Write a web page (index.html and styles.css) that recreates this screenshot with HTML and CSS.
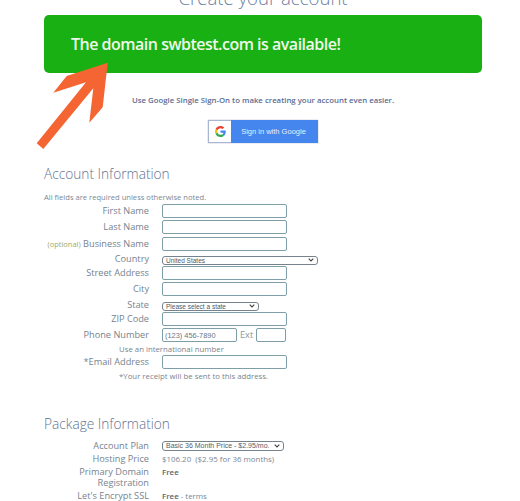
FILE: index.html
```html
<!DOCTYPE html>
<html lang="en">
<head>
    <meta charset="UTF-8">
    <title>Create your account</title>
    <link rel="stylesheet" href="styles.css">
</head>
<body>
    <div class="page">
        <h1>Create your account</h1>

        <div class="banner">The domain swbtest.com is available!</div>

        <svg class="arrow" width="90" height="100" viewBox="0 0 90 100">
            <polygon points="80.7,5.7 39.7,19 26.3,35.7 59,25.3 9.7,86.3 16.3,92 66.3,31.3 62.3,65.7 75.7,50.3"/>
        </svg>

        <p class="sso-text">Use Google Single Sign-On to make creating your account even easier.</p>

        <div class="google-wrap">
            <a href="#" class="google-btn">
                <span class="google-icon">
                    <svg width="11" height="11" viewBox="0 0 48 48">
                        <path fill="#EA4335" d="M24 9.5c3.500 0 6.700 1.200 9.200 3.600l6.900-6.900C35.900 2.400 30.500 0 24 0 14.600 0 6.500 5.400 2.600 13.200l8 6.200C12.500 13.700 17.800 9.500 24 9.500z"/>
                        <path fill="#4285F4" d="M46.900 24.500c0-1.600-.1-3.100-.4-4.500H24v9h12.900c-.6 3-2.200 5.500-4.700 7.200l7.700 6c4.500-4.200 7-10.300 7-17.700z"/>
                        <path fill="#FBBC05" d="M10.500 28.600c-.5-1.400-.8-3-.8-4.600s.3-3.200.8-4.600l-8-6.200C.9 16.500 0 20.100 0 24s.9 7.500 2.600 10.800l7.900-6.200z"/>
                        <path fill="#34A853" d="M24 48c6.500 0 11.900-2.100 15.900-5.800l-7.700-6c-2.200 1.400-4.900 2.300-8.200 2.300-6.200 0-11.500-4.200-13.400-9.900l-8 6.200C6.500 42.600 14.600 48 24 48z"/>
                    </svg>
                </span>
                <span class="google-label">Sign in with Google</span>
            </a>
        </div>

        <h2 class="section-first">Account Information</h2>
        <p class="note">All fields are required unless otherwise noted.</p>

        <div class="row">
            <label>First Name</label>
            <input type="text" class="field">
        </div>
        <div class="row">
            <label>Last Name</label>
            <input type="text" class="field">
        </div>
        <div class="row">
            <label><span class="optional">(optional)</span> Business Name</label>
            <input type="text" class="field">
        </div>
        <div class="row row-country">
            <label>Country</label>
            <select class="country"><option>United States</option></select>
        </div>
        <div class="row">
            <label>Street Address</label>
            <input type="text" class="field">
        </div>
        <div class="row">
            <label>City</label>
            <input type="text" class="field">
        </div>
        <div class="row row-state">
            <label>State</label>
            <select class="state"><option>Please select a state</option></select>
        </div>
        <div class="row">
            <label>ZIP Code</label>
            <input type="text" class="field">
        </div>
        <div class="row">
            <label>Phone Number</label>
            <input type="text" class="field phone" value="(123) 456-7890">
            <span class="ext-label">Ext</span>
            <input type="text" class="field ext">
        </div>
        <div class="hint intl">Use an international number</div>
        <div class="row">
            <label>*Email Address</label>
            <input type="text" class="field">
        </div>
        <div class="hint receipt">*Your receipt will be sent to this address.</div>

        <h2 class="section-second">Package Information</h2>

        <div class="row row-plan">
            <label>Account Plan</label>
            <select class="plan"><option>Basic 36 Month Price - $2.95/mo.</option></select>
        </div>
        <div class="row row-text">
            <label>Hosting Price</label>
            <span class="value">$106.20 &nbsp;($2.95 for 36 months)</span>
        </div>
        <div class="row row-text">
            <label>Primary Domain Registration</label>
            <span class="value"><b>Free</b></span>
        </div>
        <div class="row row-text">
            <label>Let's Encrypt SSL</label>
            <span class="value"><b>Free</b> - terms</span>
        </div>
    </div>
</body>
</html>
```

FILE: styles.css
```css
html, body {
    height: 501px;
    overflow: hidden;
}

body {
    font-family: 'Open Sans', 'Liberation Sans', sans-serif;
    margin: 0;
    padding: 0;
    background-color: #fff;
    color: #6b7a8f;
}

.page {
    position: relative;
    width: 438px;
    margin-left: 44px;
}

h1 {
    margin: -13px 0 0;
    height: 28px;
    font-size: 18.6px;
    line-height: 22px;
    font-weight: 300;
    color: #6c7fa3;
    text-align: center;
}

.banner {
    height: 58px;
    line-height: 58px;
    padding-left: 27px;
    background-color: #19b013;
    border-radius: 5px;
    color: #eef9ea;
    font-size: 16px;
    font-weight: 600;
    letter-spacing: -0.5px;
}

.arrow {
    position: absolute;
    left: -17px;
    top: 70px;
}

.arrow polygon {
    fill: #f56533;
}

.sso-text {
    margin: 21px 0 0;
    height: 12px;
    line-height: 12px;
    padding-left: 88px;
    font-size: 7.8px;
    font-weight: 600;
    color: #5b6c93;
    white-space: nowrap;
}

.google-wrap {
    margin: 14px 0 0 164px;
}

.google-btn {
    display: flex;
    width: 110px;
    height: 23px;
    text-decoration: none;
    box-shadow: 0 0 1px rgba(50, 70, 120, 0.6);
}

.google-icon {
    display: flex;
    justify-content: center;
    align-items: center;
    width: 23px;
    background-color: #fff;
    border: 1px solid #a9b6d3;
    border-right: none;
    box-sizing: border-box;
}

.google-label {
    flex-grow: 1;
    padding-right: 2px;
    background-color: #4585ee;
    color: #e6eefc;
    font-family: 'Liberation Sans', sans-serif;
    font-size: 7.5px;
    line-height: 23px;
    text-align: center;
}

h2 {
    margin: 0;
    font-size: 13.7px;
    font-weight: 300;
    color: #5f7390;
    line-height: 20px;
}

.section-first {
    margin-top: 21px;
}

.section-second {
    margin-top: 30px;
    margin-bottom: 6px;
}

.note {
    margin: 7.5px 0 0;
    font-size: 7.6px;
    line-height: 11px;
    color: #7b8794;
}

.row {
    display: flex;
    align-items: center;
    height: 16.5px;
    font-size: 9.2px;
}

.row label {
    flex: none;
    width: 105px;
    margin-right: 13px;
    margin-bottom: 1px;
    text-align: right;
    color: #76838f;
}

.optional {
    font-size: 7.5px;
    color: #a4a868;
}

.field {
    box-sizing: border-box;
    width: 125px;
    height: 14px;
    padding: 0 2px;
    border: 1px solid #7e9fa8;
    border-radius: 2px;
    background: #fff;
    font-family: 'Liberation Sans', sans-serif;
    font-size: 7.4px;
    color: #6a7683;
}

.phone {
    width: 75px;
}

.ext {
    width: 30px;
}

.ext-label {
    margin: 0 3px 1px;
    color: #8a96a0;
}

select {
    appearance: none;
    box-sizing: border-box;
    height: 9px;
    padding: 0 0 0 3px;
    border: 1px solid #75838f;
    border-radius: 3px;
    background: #fff url("data:image/svg+xml,%3Csvg xmlns='http://www.w3.org/2000/svg' width='6' height='4'%3E%3Cpath d='M.7.7 3 3 5.300.7' fill='none' stroke='%23444' stroke-width='1.100'/%3E%3C/svg%3E") no-repeat right 3px center;
    font-family: 'Liberation Sans', sans-serif;
    font-size: 6.5px;
    line-height: 7px;
    color: #4c5864;
}

.row-country {
    height: 12.5px;
    align-items: flex-end;
}

.row-state {
    height: 13px;
    align-items: flex-end;
}

.row-country label,
.row-state label {
    margin-bottom: 0;
}

.country {
    width: 156px;
}

.state {
    width: 97px;
}

.plan {
    width: 122px;
    height: 10px;
    font-size: 7px;
    color: #55606c;
}

.hint {
    font-size: 7.8px;
    color: #78858f;
}

.intl {
    height: 10px;
    line-height: 10px;
    padding-left: 75px;
}

.receipt {
    height: 13.5px;
    line-height: 13.5px;
    padding-left: 75px;
}

.row-plan {
    height: 12px;
}

.row-text {
    height: auto;
    align-items: flex-start;
    line-height: 10.5px;
    margin-top: 2.5px;
}

.row-text label {
    margin-bottom: 0;
}

.value {
    font-size: 7.9px;
    color: #7b8794;
}

.value b {
    font-weight: 600;
    color: #5d6670;
}
```
